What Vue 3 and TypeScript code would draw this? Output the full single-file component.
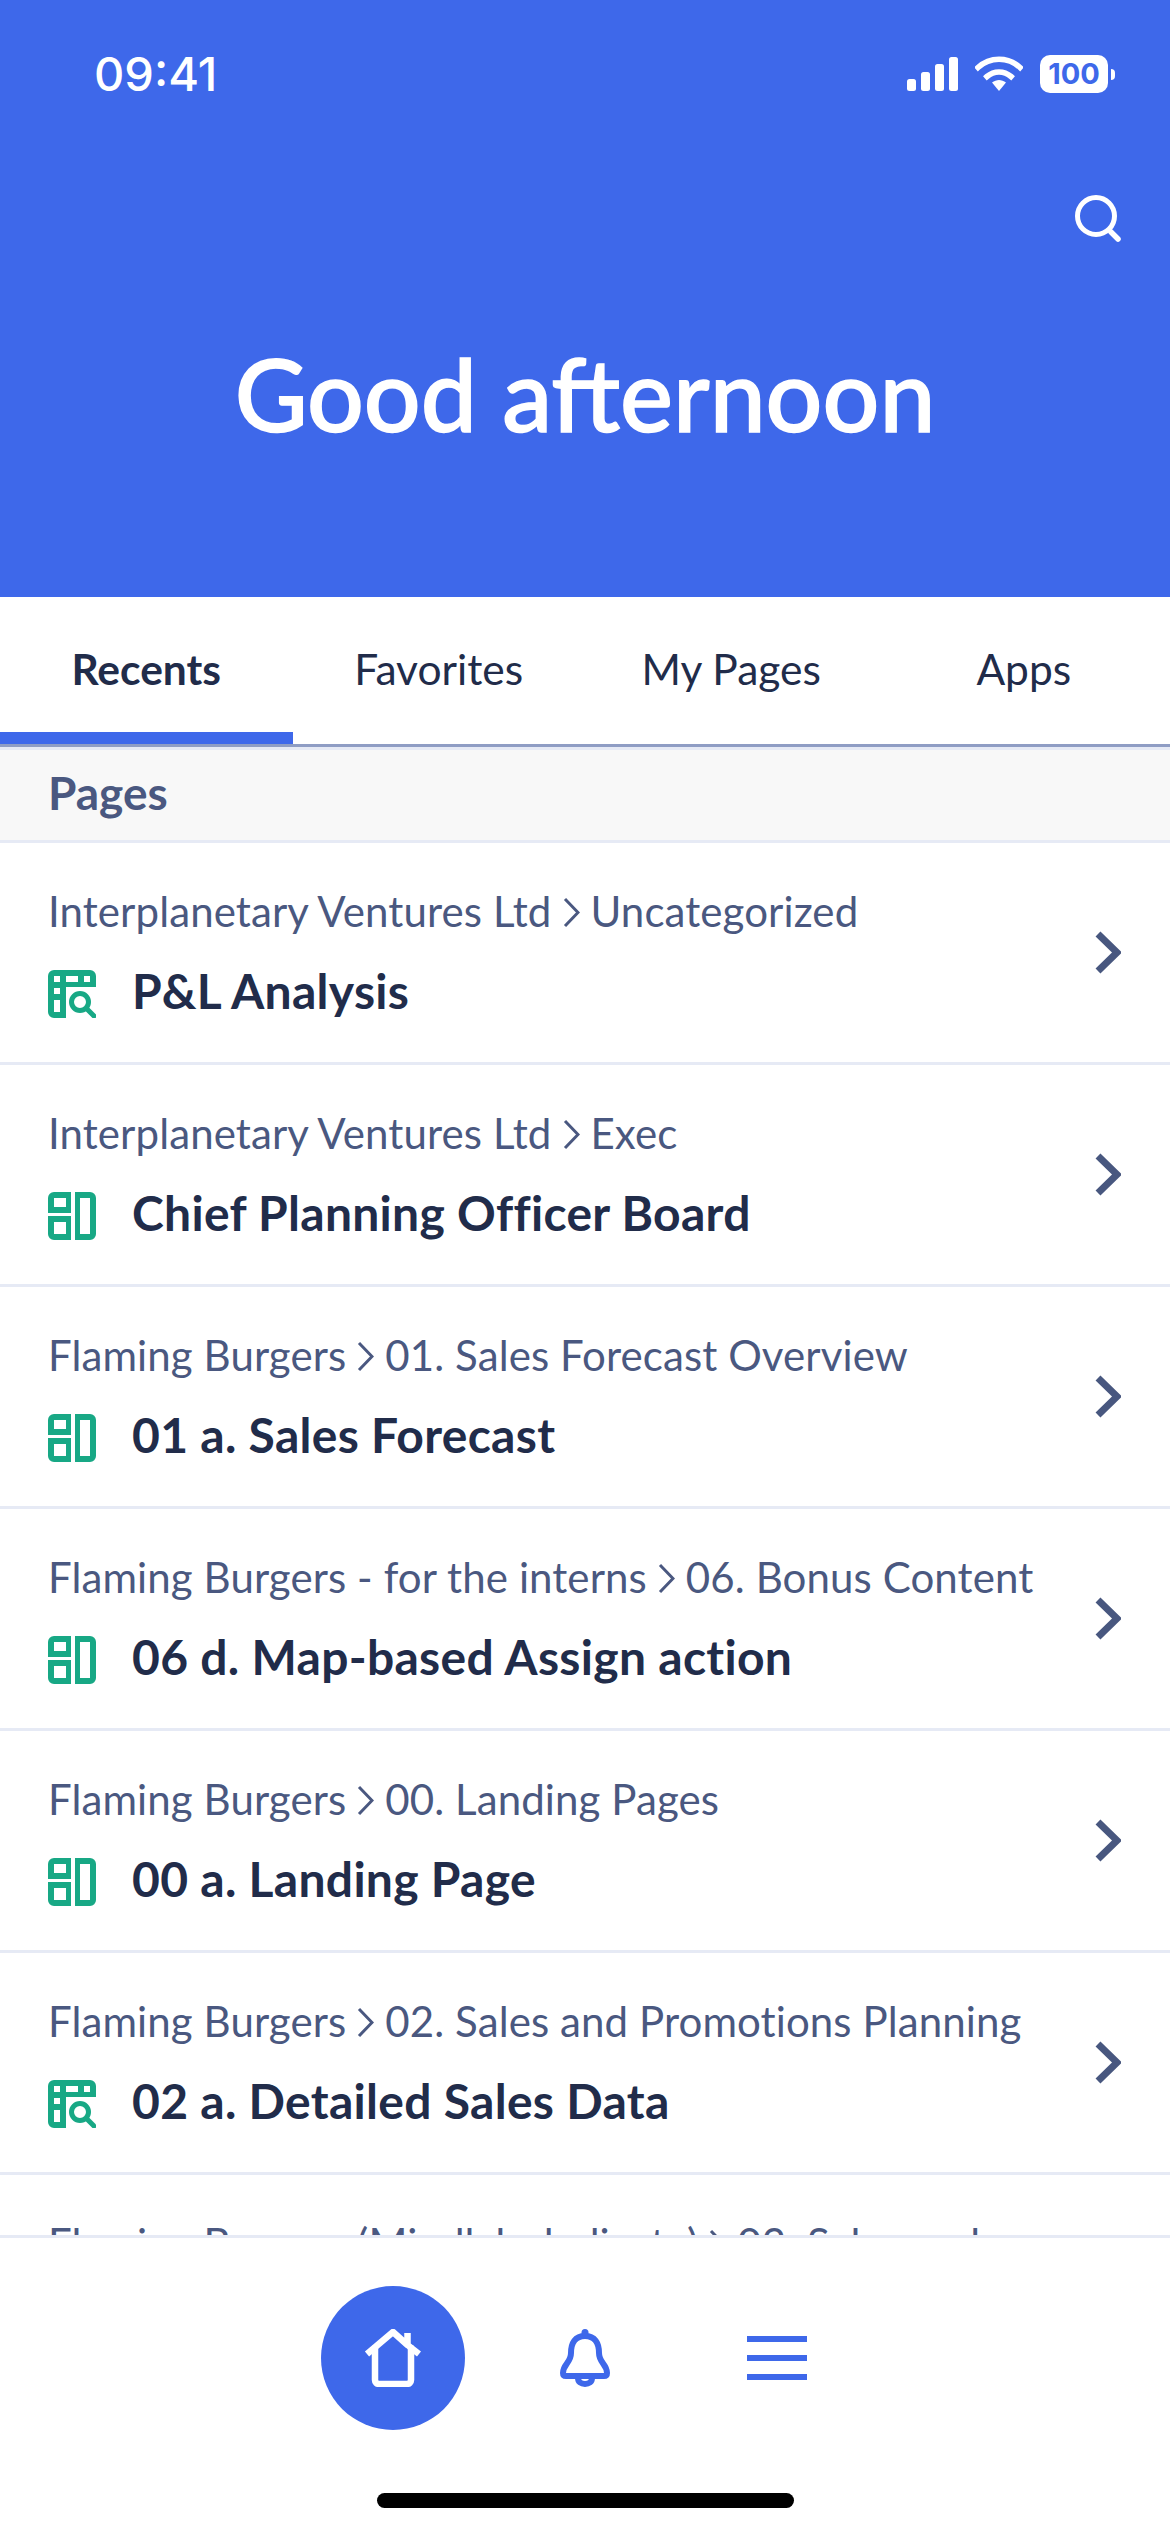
<script setup lang="ts">
interface PageItem {
  parent: string
  section: string
  title: string
  icon: 'table' | 'board'
}
const tabs: string[] = ['Recents', 'Favorites', 'My Pages', 'Apps']
const items: PageItem[] = [
  { parent: 'Interplanetary Ventures Ltd', section: 'Uncategorized', title: 'P&L Analysis', icon: 'table' },
  { parent: 'Interplanetary Ventures Ltd', section: 'Exec', title: 'Chief Planning Officer Board', icon: 'board' },
  { parent: 'Flaming Burgers', section: '01. Sales Forecast Overview', title: '01 a. Sales Forecast', icon: 'board' },
  { parent: 'Flaming Burgers - for the interns', section: '06. Bonus Content', title: '06 d. Map-based Assign action', icon: 'board' },
  { parent: 'Flaming Burgers', section: '00. Landing Pages', title: '00 a. Landing Page', icon: 'board' },
  { parent: 'Flaming Burgers', section: '02. Sales and Promotions Planning', title: '02 a. Detailed Sales Data', icon: 'table' },
  { parent: 'Flaming Burgers (Mindlab dedicate)', section: '02. Sales and', title: '02 b. Promotions', icon: 'table' },
]
</script>

<template>
  <div class="screen">
    <header class="hero">
      <div class="status">
        <span class="time">09:41</span>
        <div class="status-icons">
          <svg class="signal" width="51" height="34" viewBox="0 0 51 34" fill="#fff">
            <rect x="0" y="22" width="9" height="12" rx="2.5" />
            <rect x="14" y="15" width="9" height="19" rx="2.5" />
            <rect x="28" y="7" width="9" height="27" rx="2.5" />
            <rect x="42" y="0" width="9" height="34" rx="2.5" />
          </svg>
          <svg class="wifi" width="48" height="36" viewBox="0 0 48 36">
            <path d="M3 12.5C15 1.5 33 1.5 45 12.5" fill="none" stroke="#fff" stroke-width="5.6" stroke-linecap="square" />
            <path d="M12 21.5C19 15.5 29 15.5 36 21.5" fill="none" stroke="#fff" stroke-width="5.6" stroke-linecap="square" />
            <path d="M17 27.6C21.5 24 26.5 24 31 27.6L24 36Z" fill="#fff" />
          </svg>
          <div class="battery">
            <span class="battery-body">100</span>
            <span class="battery-cap"></span>
          </div>
        </div>
      </div>
      <div class="search-row">
        <svg width="46" height="48" viewBox="0 0 46 48" fill="none" stroke="#fff">
          <circle cx="21" cy="21" r="18.5" stroke-width="5" />
          <path d="M36 37L43 44" stroke-width="5.5" stroke-linecap="round" />
        </svg>
      </div>
      <h1 class="greeting">Good afternoon</h1>
    </header>

    <nav class="tabs">
      <div v-for="(tab, i) in tabs" :key="tab" class="tab" :class="{ active: i === 0 }">{{ tab }}</div>
    </nav>

    <div class="section">Pages</div>

    <main class="list">
      <article v-for="item in items" :key="item.title" class="row">
        <div class="row-text">
          <div class="crumbs">
            <span>{{ item.parent }}</span>
            <svg class="crumb-sep" width="17" height="31" viewBox="0 0 17 31" fill="none" stroke="#4a5880" stroke-width="3">
              <path d="M2 2L15 15.5L2 29" />
            </svg>
            <span>{{ item.section }}</span>
          </div>
          <div class="title-line">
            <svg v-if="item.icon === 'table'" class="type-icon" width="48" height="48" viewBox="0 0 48 48" fill="#18a885">
              <path fill-rule="evenodd" d="M6 0H42A6 6 0 0 1 48 6V17H18V48H6A6 6 0 0 1 0 42V6A6 6 0 0 1 6 0ZM6 6V12H12V6ZM18 6V12H30V6ZM36 6V12H42V6ZM6 18V24H12V18ZM6 30V42H12V30Z" />
              <circle cx="32" cy="32" r="8.5" fill="none" stroke="#18a885" stroke-width="5" />
              <path d="M38.5 38.5L46 46" stroke="#18a885" stroke-width="5" stroke-linecap="square" />
            </svg>
            <svg v-else class="type-icon" width="48" height="48" viewBox="0 0 48 48" fill="#18a885">
              <path fill-rule="evenodd" d="M6 0H23V21H0V6A6 6 0 0 1 6 0ZM6 6V15H18V6Z" />
              <path fill-rule="evenodd" d="M0 24H23V48H6A6 6 0 0 1 0 42ZM6 30V42H18V30Z" />
              <path fill-rule="evenodd" d="M27 0H42A6 6 0 0 1 48 6V42A6 6 0 0 1 42 48H27ZM32 6V42H42V6Z" />
            </svg>
            <span class="title">{{ item.title }}</span>
          </div>
        </div>
        <svg class="chevron" width="26" height="43" viewBox="0 0 26 43" fill="none" stroke="#48577f" stroke-width="7">
          <path d="M3 3L22 21.5L3 40" />
        </svg>
      </article>
    </main>

    <footer class="bottom">
      <div class="nav">
        <button class="nav-home" type="button" aria-label="Home">
          <svg width="58" height="58" viewBox="0 0 58 58" fill="none" stroke="#fff" stroke-width="6.5" stroke-linejoin="round" stroke-linecap="round">
            <path d="M3 25L29 3L43.5 16V4M43.5 16L55 25" stroke-linecap="butt" />
            <path d="M11 19V51A4 4 0 0 0 15 55H43A4 4 0 0 0 47 51V19" />
          </svg>
        </button>
        <button class="nav-btn bell" type="button" aria-label="Notifications">
          <svg width="50" height="58" viewBox="0 0 50 58" fill="none" stroke="#3e68ea" stroke-width="6">
            <path d="M25 7C15 7 11 14 11 24C11 34 3 35 3 44C3 46 4 47 6 47H44C46 47 47 46 47 44C47 35 39 34 39 24C39 14 35 7 25 7Z" />
            <path d="M18 49C18 53 21 55 25 55C29 55 32 53 32 49" />
            <circle cx="25" cy="3.5" r="3.5" fill="#3e68ea" stroke="none" />
          </svg>
        </button>
        <button class="nav-btn menu" type="button" aria-label="Menu">
          <span></span><span></span><span></span>
        </button>
      </div>
      <div class="home-bar"></div>
    </footer>
  </div>
</template>

<style scoped>
.screen {
  width: 1170px;
  height: 2532px;
  display: flex;
  flex-direction: column;
  overflow: hidden;
  background: #fff;
  font-family: Lato, "Open Sans", sans-serif;
  color: #212c4a;
}
.hero {
  height: 597px;
  flex: none;
  background: #3e68ea;
  color: #fff;
  display: flex;
  flex-direction: column;
  box-sizing: border-box;
  padding: 55px 55px 0 94px;
}
.status {
  display: flex;
  justify-content: space-between;
  align-items: flex-start;
  height: 38px;
}
.time {
  font-family: Inter, sans-serif;
  font-size: 47px;
  font-weight: 500;
  line-height: 38px;
}
.status-icons {
  display: flex;
  align-items: flex-start;
}
.signal {
  margin-top: 2px;
  margin-right: 17px;
}
.wifi {
  margin-right: 17px;
}
.battery {
  display: flex;
  align-items: center;
  height: 38px;
}
.battery-body {
  width: 68px;
  height: 38px;
  border-radius: 10px;
  background: #fff;
  color: #3e68ea;
  font-family: Inter, sans-serif;
  font-size: 29px;
  font-weight: 700;
  line-height: 38px;
  text-align: center;
}
.battery-cap {
  width: 4px;
  height: 11px;
  margin-left: 3px;
  background: #fff;
  border-radius: 0 4px 4px 0;
}
.search-row {
  display: flex;
  justify-content: flex-end;
  margin-top: 102px;
  margin-right: -6px;
  height: 48px;
}
.greeting {
  margin: 94px 0 0 -94px;
  width: 1170px;
  text-align: center;
  font-size: 100px;
  font-weight: 500;
  line-height: 112px;
  -webkit-text-stroke: 1.5px #fff;
}
.tabs {
  flex: none;
  height: 150px;
  display: grid;
  grid-template-columns: repeat(4, 1fr);
  box-sizing: border-box;
  border-bottom: 3px solid #8f9dc4;
}
.tab {
  display: flex;
  justify-content: center;
  align-items: center;
  padding-bottom: 5px;
  font-size: 42.5px;
  color: #212c4a;
}
.tab.active {
  font-weight: 700;
  box-shadow: inset 0 -12px 0 #3e68ea;
}
.section {
  flex: none;
  box-sizing: border-box;
  height: 96px;
  padding: 0 48px 6px;
  display: flex;
  align-items: center;
  background: #f8f8f8;
  border-top: 3px solid #e6eaf5;
  border-bottom: 3px solid #e6eaf5;
  font-size: 46px;
  font-weight: 700;
  color: #4a5880;
}
.list {
  flex: 1;
  min-height: 0;
  overflow: hidden;
}
.row {
  height: 222px;
  box-sizing: border-box;
  padding: 0 49px 0 48px;
  display: flex;
  align-items: center;
  justify-content: space-between;
  border-bottom: 3px solid #e6eaf5;
}
.row-text {
  display: flex;
  flex-direction: column;
  gap: 32px;
}
.crumbs {
  display: flex;
  align-items: center;
  gap: 11px;
  height: 50px;
  box-sizing: border-box;
  padding-bottom: 3px;
  font-size: 42px;
  letter-spacing: 0.1px;
  color: #4a5880;
  white-space: nowrap;
}
.crumb-sep {
  flex: none;
  margin-top: 3px;
}
.title-line {
  display: flex;
  align-items: center;
  gap: 36px;
  height: 48px;
}
.type-icon {
  flex: none;
}
.title {
  font-size: 48px;
  font-weight: 700;
  letter-spacing: 0.3px;
  color: #212c4a;
  white-space: nowrap;
  margin-top: -7px;
}
.chevron {
  flex: none;
}
.bottom {
  flex: none;
  height: 297px;
  box-sizing: border-box;
  border-top: 3px solid #e6eaf5;
  background: #fff;
  position: relative;
  display: flex;
  flex-direction: column;
  align-items: center;
}
.nav {
  margin-top: 48px;
  margin-right: 42px;
  height: 144px;
  display: flex;
  align-items: center;
}
button {
  border: 0;
  padding: 0;
  background: none;
  display: flex;
  align-items: center;
  justify-content: center;
}
.nav-home {
  width: 144px;
  height: 144px;
  border-radius: 50%;
  background: #3e68ea;
}
.bell {
  width: 50px;
  margin-left: 95px;
}
.menu {
  width: 60px;
  margin-left: 137px;
  flex-direction: column;
  gap: 13px;
}
.menu span {
  display: block;
  width: 60px;
  height: 6px;
  background: #3e68ea;
}
.home-bar {
  margin-top: 63px;
  width: 417px;
  height: 15px;
  border-radius: 8px;
  background: #000;
}
</style>
